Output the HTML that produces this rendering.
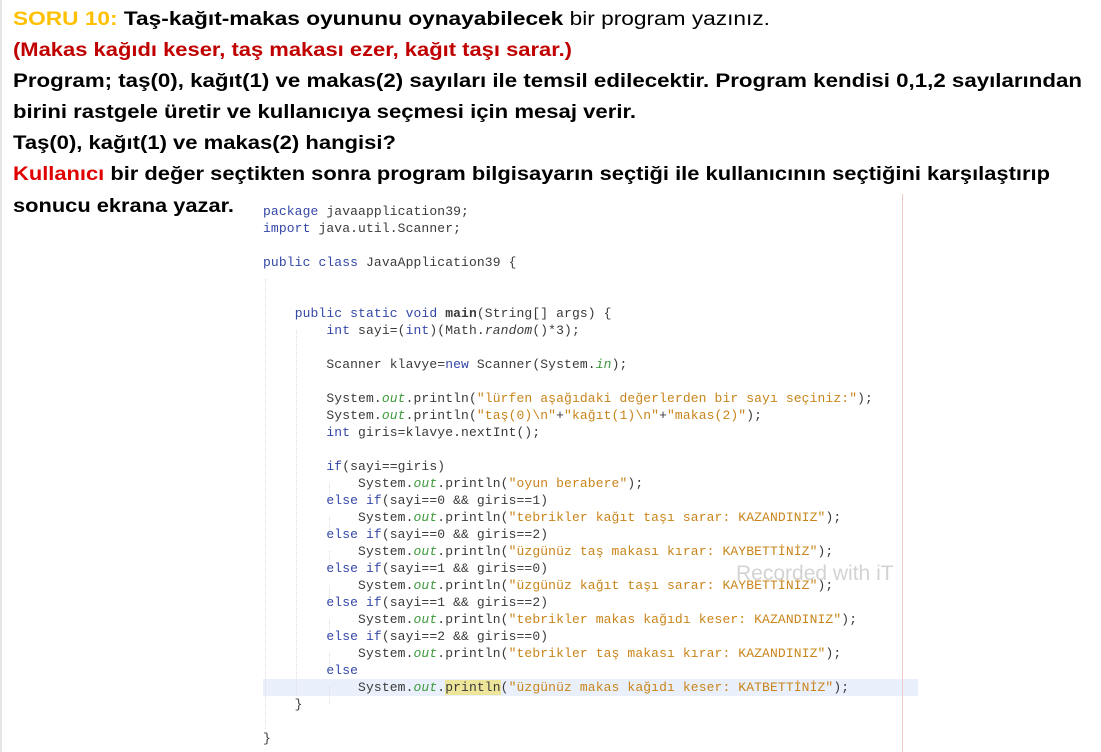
<!DOCTYPE html>
<html><head><meta charset="utf-8"><style>
html,body{margin:0;padding:0;background:#fff;width:1101px;height:752px;overflow:hidden;position:relative}
svg.h{position:absolute;left:0;top:0}
.code{position:absolute;left:258px;top:194px;width:660px;height:558px;background:#fff;overflow:hidden}
pre{margin:0;position:absolute;left:5px;top:9px;font-family:"Liberation Mono",monospace;font-size:13px;letter-spacing:0.12px;line-height:17px;color:#3a3a3a}
.k{color:#3447a8}.s{color:#c9841a}.o{color:#3f9a3f;font-style:italic}.b{font-weight:bold}.i{font-style:italic}
.hl{position:absolute;left:5px;top:485px;width:655px;height:17px;background:#e9f0fb}
.mark{background:#ede59a}
.vr{position:absolute;left:644px;top:0;width:1px;height:558px;background:#f0c8c8}
.g{position:absolute;border-left:1px dotted #ddd}
.wm{position:absolute;left:478px;top:368px;font-family:"Liberation Sans",sans-serif;font-size:21px;color:rgba(200,200,200,0.8)}
</style></head><body>
<div style="position:absolute;left:0;top:0;width:2px;height:752px;background:#e6e6e6"></div>
<svg class="h" width="1101" height="230" font-family="Liberation Sans, sans-serif" font-size="19" font-weight="bold">
<text x="13" y="25" textLength="757" lengthAdjust="spacingAndGlyphs"><tspan fill="#ffc000">SORU 10: </tspan><tspan fill="#000">Taş-kağıt-makas oyununu oynayabilecek </tspan><tspan fill="#000" font-weight="normal">bir program yazınız.</tspan></text>
<text x="13" y="56" fill="#c00000" textLength="559" lengthAdjust="spacingAndGlyphs">(Makas kağıdı keser, taş makası ezer, kağıt taşı sarar.)</text>
<text x="13" y="87" textLength="1069" lengthAdjust="spacingAndGlyphs">Program; taş(0), kağıt(1) ve makas(2) sayıları ile temsil edilecektir. Program kendisi 0,1,2 sayılarından</text>
<text x="13" y="118" textLength="623" lengthAdjust="spacingAndGlyphs">birini rastgele üretir ve kullanıcıya seçmesi için mesaj verir.</text>
<text x="13" y="149" textLength="383" lengthAdjust="spacingAndGlyphs">Taş(0), kağıt(1) ve makas(2) hangisi?</text>
<text x="13" y="180" textLength="1037" lengthAdjust="spacingAndGlyphs"><tspan fill="#e00000">Kullanıcı</tspan> bir değer seçtikten sonra program bilgisayarın seçtiği ile kullanıcının seçtiğini karşılaştırıp</text>
<text x="13" y="212" textLength="221" lengthAdjust="spacingAndGlyphs">sonucu ekrana yazar.</text>
</svg>
<div class="code">
<div class="hl"></div>
<div class="vr"></div>
<div class="g" style="left:7px;top:85px;height:450px"></div>
<div class="g" style="left:38px;top:136px;height:365px"></div>
<div class="g" style="left:71px;top:289px;height:17px"></div>
<div class="g" style="left:71px;top:323px;height:17px"></div>
<div class="g" style="left:71px;top:357px;height:17px"></div>
<div class="g" style="left:71px;top:391px;height:17px"></div>
<div class="g" style="left:71px;top:425px;height:17px"></div>
<div class="g" style="left:71px;top:459px;height:17px"></div>
<div class="g" style="left:71px;top:493px;height:17px"></div>
<pre><span class="k">package</span> javaapplication39;
<span class="k">import</span> java.util.Scanner;

<span class="k">public class</span> JavaApplication39 {


    <span class="k">public static void</span> <span class="b">main</span>(String[] args) {
        <span class="k">int</span> sayi=(<span class="k">int</span>)(Math.<span class="i">random</span>()*3);

        Scanner klavye=<span class="k">new</span> Scanner(System.<span class="o">in</span>);

        System.<span class="o">out</span>.println(<span class="s">"lürfen aşağıdaki değerlerden bir sayı seçiniz:"</span>);
        System.<span class="o">out</span>.println(<span class="s">"taş(0)\n"</span>+<span class="s">"kağıt(1)\n"</span>+<span class="s">"makas(2)"</span>);
        <span class="k">int</span> giris=klavye.nextInt();

        <span class="k">if</span>(sayi==giris)
            System.<span class="o">out</span>.println(<span class="s">"oyun berabere"</span>);
        <span class="k">else if</span>(sayi==0 &amp;&amp; giris==1)
            System.<span class="o">out</span>.println(<span class="s">"tebrikler kağıt taşı sarar: KAZANDINIZ"</span>);
        <span class="k">else if</span>(sayi==0 &amp;&amp; giris==2)
            System.<span class="o">out</span>.println(<span class="s">"üzgünüz taş makası kırar: KAYBETTİNİZ"</span>);
        <span class="k">else if</span>(sayi==1 &amp;&amp; giris==0)
            System.<span class="o">out</span>.println(<span class="s">"üzgünüz kağıt taşı sarar: KAYBETTİNİZ"</span>);
        <span class="k">else if</span>(sayi==1 &amp;&amp; giris==2)
            System.<span class="o">out</span>.println(<span class="s">"tebrikler makas kağıdı keser: KAZANDINIZ"</span>);
        <span class="k">else if</span>(sayi==2 &amp;&amp; giris==0)
            System.<span class="o">out</span>.println(<span class="s">"tebrikler taş makası kırar: KAZANDINIZ"</span>);
        <span class="k">else</span>
            System.<span class="o">out</span>.<span class="mark">println</span>(<span class="s">"üzgünüz makas kağıdı keser: KATBETTİNİZ"</span>);
    }

}</pre>
<div class="wm">Recorded with iT</div>
</div>
</body></html>
